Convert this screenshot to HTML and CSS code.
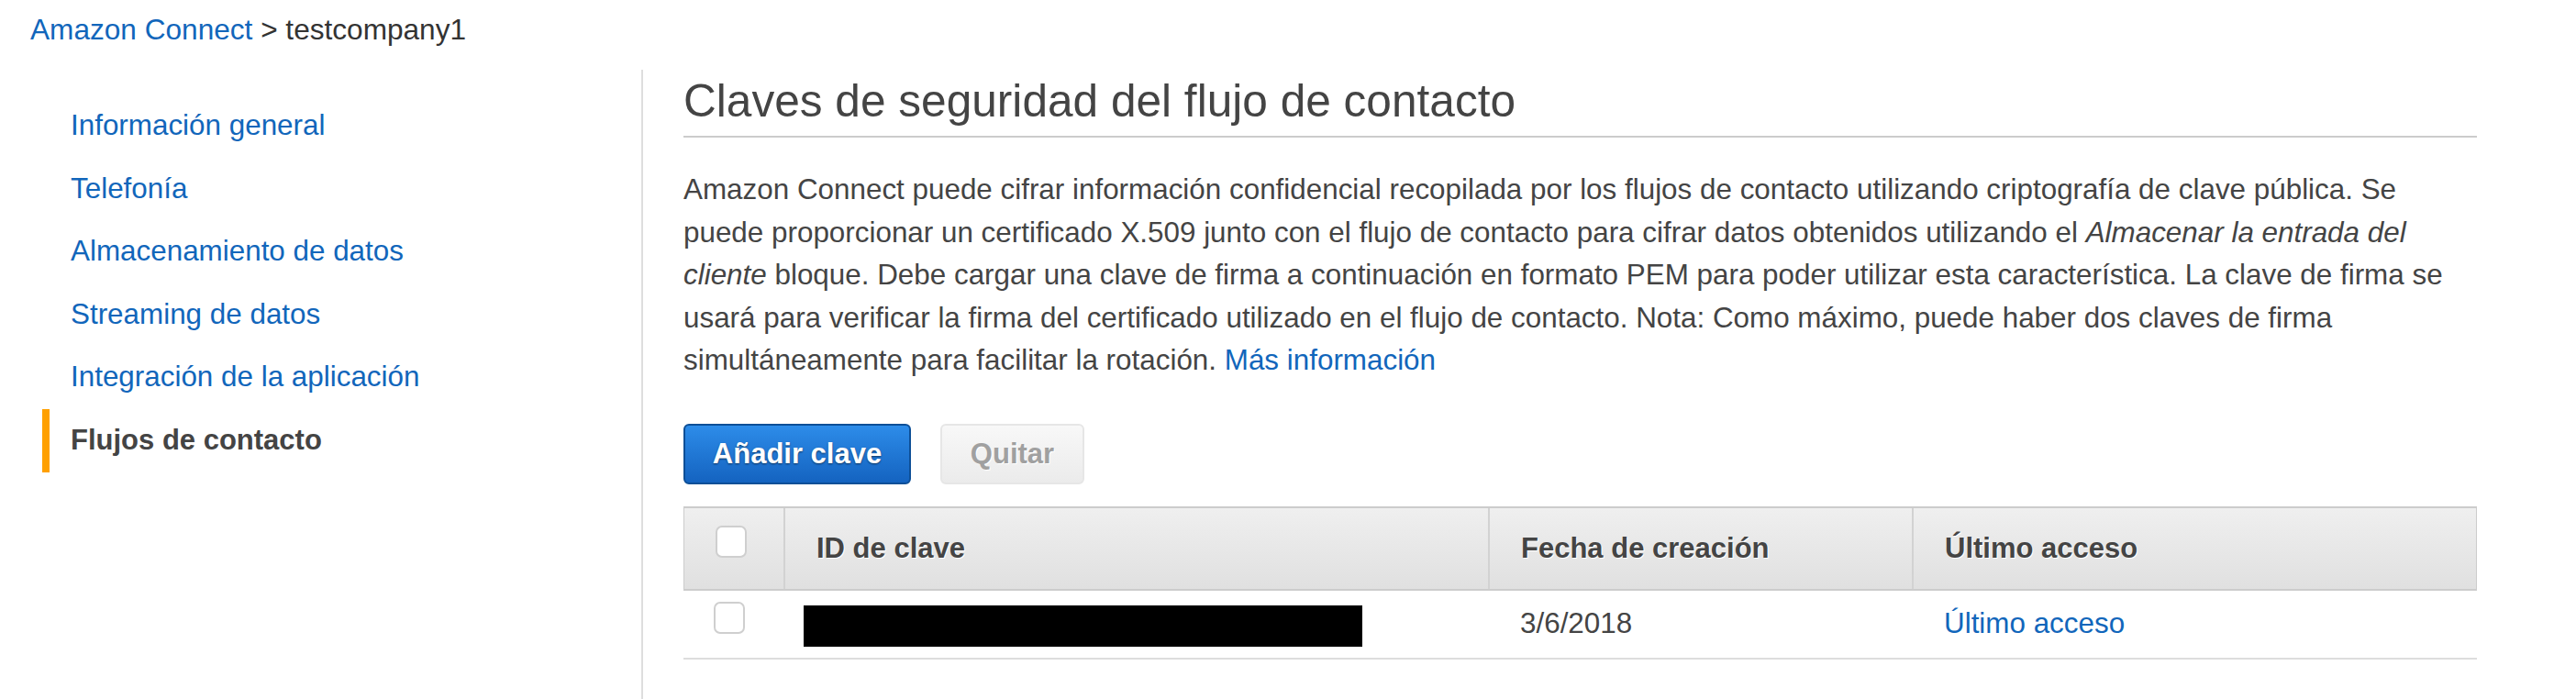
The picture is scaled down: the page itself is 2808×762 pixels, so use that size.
FILE: index.html
```html
<!DOCTYPE html>
<html lang="es">
<head>
<meta charset="utf-8">
<title>Amazon Connect - Flujos de contacto</title>
<link rel="stylesheet" href="styles.css">
</head>
<body>
<div class="crumb"><a class="link" href="#">Amazon Connect</a> &gt; testcompany1</div>
<div class="layout">
  <nav class="side">
    <ul class="nav">
      <li class="nav-item"><a class="link" href="#">Información general</a></li>
      <li class="nav-item"><a class="link" href="#">Telefonía</a></li>
      <li class="nav-item"><a class="link" href="#">Almacenamiento de datos</a></li>
      <li class="nav-item"><a class="link" href="#">Streaming de datos</a></li>
      <li class="nav-item"><a class="link" href="#">Integración de la aplicación</a></li>
      <li class="nav-item active">Flujos de contacto</li>
    </ul>
  </nav>
  <main class="content">
    <h1 class="title">Claves de seguridad del flujo de contacto</h1>
    <p class="desc">Amazon Connect puede cifrar información confidencial recopilada por los flujos de contacto utilizando criptografía de clave pública. Se puede proporcionar un certificado X.509 junto con el flujo de contacto para cifrar datos obtenidos utilizando el <em>Almacenar la entrada del cliente</em> bloque. Debe cargar una clave de firma a continuación en formato PEM para poder utilizar esta característica. La clave de firma se usará para verificar la firma del certificado utilizado en el flujo de contacto. Nota: Como máximo, puede haber dos claves de firma simultáneamente para facilitar la rotación. <a class="link" href="#">Más información</a></p>
    <div class="actions">
      <button class="btn primary" type="button">Añadir clave</button>
      <button class="btn disabled" type="button">Quitar</button>
    </div>
    <div class="table">
      <div class="thead">
        <div class="cell check-cell"><span class="checkbox"></span></div>
        <div class="cell th">ID de clave</div>
        <div class="cell th">Fecha de creación</div>
        <div class="cell th">Último acceso</div>
      </div>
      <div class="trow">
        <div class="cell check-cell"><span class="checkbox"></span></div>
        <div class="cell"><span class="redacted"></span></div>
        <div class="cell">3/6/2018</div>
        <div class="cell"><a class="link" href="#">Último acceso</a></div>
      </div>
    </div>
  </main>
</div>
</body>
</html>
```

FILE: styles.css
```css
html, body {
  margin: 0;
  padding: 0;
  background: #ffffff;
}

body {
  font-family: "Liberation Sans", Arial, Helvetica, sans-serif;
  font-size: 31.4px;
  color: #444444;
  width: 2808px;
  height: 762px;
  overflow: hidden;
}

.link {
  color: #1166bb;
  text-decoration: none;
}

.crumb {
  padding: 14px 0 0 33px;
  line-height: 36px;
  height: 36px;
  color: #333333;
  font-size: 31.6px;
}

.layout {
  display: flex;
  margin-top: 26px;
  min-height: 686px;
}

.side {
  width: 699px;
  flex: 0 0 699px;
  border-right: 2px solid #dedede;
}

.nav {
  list-style: none;
  margin: 0;
  padding: 27px 0 0 46px;
}

.nav-item {
  line-height: 68.6px;
  height: 68.6px;
  border-left: 8px solid transparent;
  padding-left: 23px;
}

.nav-item.active {
  border-left-color: #ffa000;
  font-weight: bold;
  font-size: 31px;
  color: #444444;
}

.content {
  flex: 1 1 auto;
  padding: 4px 108px 0 44px;
}

.title {
  margin: 0;
  font-size: 49.6px;
  font-weight: normal;
  line-height: 60px;
  padding-bottom: 8px;
  border-bottom: 2px solid #cccccc;
  color: #444444;
}

.desc {
  margin: 34px 0 0 0;
  max-width: 1930px;
  line-height: 46.5px;
}

.actions {
  display: flex;
  gap: 32px;
  margin-top: 45px;
}

.btn {
  font-family: inherit;
  font-size: 31px;
  font-weight: bold;
  height: 66px;
  line-height: 62px;
  border-radius: 6px;
  padding: 0;
  margin: 0;
  box-sizing: border-box;
  text-align: center;
  white-space: nowrap;
  cursor: pointer;
}

.btn.primary {
  color: #ffffff;
  background: linear-gradient(#2d8ce9, #1463c0);
  border: 2px solid #0d4f97;
  text-shadow: 0 1px 2px rgba(0, 0, 0, 0.55);
  width: 248px;
}

.btn.disabled {
  color: #a0a0a0;
  background: linear-gradient(#f8f8f8, #ebebeb);
  border: 2px solid #e6e6e6;
  text-shadow: 1px 1px 0 #ffffff;
  width: 157px;
  cursor: default;
}

.table {
  margin-top: 24px;
  width: 1955px;
}

.thead,
.trow {
  display: grid;
  grid-template-columns: 108px 768px 462px 1fr;
}

.thead {
  height: 92px;
  box-sizing: border-box;
  border-top: 2px solid #cccccc;
  border-bottom: 2px solid #cccccc;
  border-left: 1px solid #cccccc;
  border-right: 1px solid #cccccc;
  background: linear-gradient(#efefef, #e0e0e0);
}

.trow {
  height: 75px;
  box-sizing: border-box;
  border-bottom: 2px solid #dddddd;
}

.cell {
  display: flex;
  align-items: center;
  padding-left: 36px;
}

.th {
  font-weight: bold;
  font-size: 31px;
  color: #444444;
  text-shadow: 1px 1px 0 #ffffff;
  border-left: 2px solid #d2d2d2;
  padding-left: 34px;
}

.check-cell {
  padding-left: 0;
  justify-content: center;
}

.checkbox {
  display: block;
  width: 30px;
  height: 31px;
  border: 2px solid #cfcfcf;
  border-radius: 7px;
  background: #ffffff;
  margin-bottom: 14px;
  margin-left: -6px;
}

.trow .checkbox {
  margin-left: -8px;
}

.redacted {
  display: block;
  width: 609px;
  height: 45px;
  background: #000000;
  margin-left: -13px;
  margin-top: 4px;
}
```
